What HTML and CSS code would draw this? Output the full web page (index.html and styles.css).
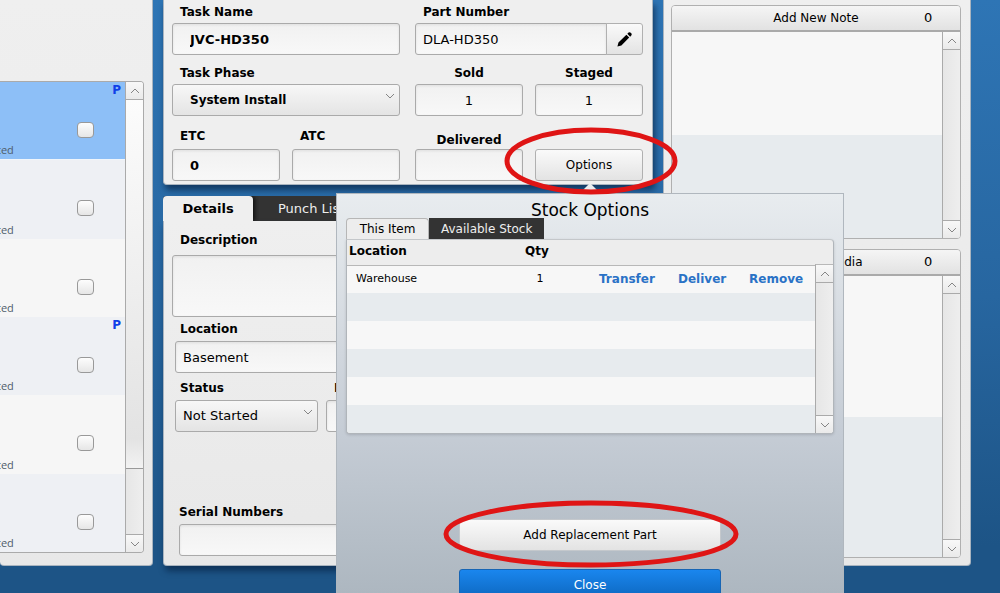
FILE: index.html
```html
<!DOCTYPE html>
<html lang="en">
<head>
<meta charset="utf-8">
<title>Task Details</title>
<link rel="stylesheet" href="styles.css">
</head>
<body>
<svg width="0" height="0" class="defs" aria-hidden="true">
  <symbol id="up" viewBox="0 0 10 6"><path d="M1 5 L5 1 L9 5" fill="none" stroke="#858585"/></symbol>
  <symbol id="down" viewBox="0 0 10 6"><path d="M1 1 L5 5 L9 1" fill="none" stroke="#858585"/></symbol>
</svg>
<main class="app">
  <section class="panel tasks" aria-label="Tasks">
    <div class="task-box">
      <ul class="task-list">
        <li class="task selected"><span class="state">ted</span><input type="checkbox" class="check" aria-label="Task 1"><b class="flag">P</b></li>
        <li class="task"><span class="state">ted</span><input type="checkbox" class="check" aria-label="Task 2"></li>
        <li class="task"><span class="state">ted</span><input type="checkbox" class="check" aria-label="Task 3"></li>
        <li class="task"><span class="state">ted</span><input type="checkbox" class="check" aria-label="Task 4"><b class="flag">P</b></li>
        <li class="task"><span class="state">ted</span><input type="checkbox" class="check" aria-label="Task 5"></li>
        <li class="task"><span class="state">ted</span><input type="checkbox" class="check" aria-label="Task 6"></li>
      </ul>
      <div class="scroll">
        <button class="step" aria-label="Scroll up"><svg class="chev"><use href="#up"/></svg></button>
        <div class="track"><div class="thumb"></div></div>
        <button class="step" aria-label="Scroll down"><svg class="chev"><use href="#down"/></svg></button>
      </div>
    </div>
  </section>

  <div class="center">
    <section class="panel summary" aria-label="Task summary">
      <div class="pair">
        <div class="field wide"><label for="name">Task Name</label><input id="name" class="box strong" value="JVC-HD350"></div>
        <div class="field wide"><label for="part">Part Number</label>
          <div class="joined">
            <input id="part" class="box" value="DLA-HD350">
            <button class="btn edit" aria-label="Edit part number"><svg width="17" height="17" viewBox="0 0 18 18"><path d="M1.500 16.500 L2.600 12.200 L11 4 L14 7 L5.700 15.300 Z M12 3 L13.300 1.700 Q14.500 .8 15.600 1.900 L16.200 2.500 Q17.200 3.600 16.200 4.800 L15 6 Z"/></svg></button>
          </div>
        </div>
        <div class="field wide"><label for="phase">Task Phase</label>
          <div class="pick"><select id="phase" class="box strong"><option>System Install</option></select><svg class="chev"><use href="#down"/></svg></div>
        </div>
        <div class="duo">
          <div class="field mid"><label for="sold">Sold</label><input id="sold" class="box" value="1"></div>
          <div class="field mid"><label for="staged">Staged</label><input id="staged" class="box" value="1"></div>
        </div>
        <div class="duo last">
          <div class="field"><label for="etc">ETC</label><input id="etc" class="box strong" value="0"></div>
          <div class="field"><label for="atc">ATC</label><input id="atc" class="box strong"></div>
        </div>
        <div class="duo last">
          <div class="field mid low"><label for="delivered">Delivered</label><input id="delivered" class="box"></div>
          <div class="field options">
            <button class="btn">Options</button>
            <svg class="pointer" width="16" height="8" viewBox="0 0 16 8"><path d="M0 8 L8 0 L16 8 Z" fill="#e9edf0"/></svg>
            <svg class="ring ring-options" width="174" height="68"><ellipse cx="87" cy="34" rx="84" ry="31"/></svg>
          </div>
        </div>
      </div>
    </section>

    <section class="details" aria-label="Task details">
      <div class="tabs">
        <button class="tab active">Details</button>
        <button class="tab">Punch List</button>
      </div>
      <div class="panel details-body">
        <div class="field"><label for="desc">Description</label><textarea id="desc" class="box"></textarea></div>
        <div class="field inset"><label for="loc">Location</label><input id="loc" class="box" value="Basement"></div>
        <div class="status-row">
          <div class="field inset"><label for="status">Status</label>
            <div class="pick"><select id="status" class="box"><option>Not Started</option></select><svg class="chev"><use href="#down"/></svg></div>
          </div>
          <div class="field"><label for="next">I</label><input id="next" class="box"></div>
        </div>
        <div class="field serial"><label for="serial">Serial Numbers</label><input id="serial" class="box"></div>
      </div>
    </section>

    <section class="dialog" role="dialog" aria-labelledby="stock">
      <h2 id="stock">Stock Options</h2>
      <div class="stock-tabs">
        <button class="stock-tab active">This Item</button>
        <button class="stock-tab">Available Stock</button>
      </div>
      <div class="stock">
        <table>
          <colgroup><col class="c-loc"><col class="c-qty"><col class="c-act"><col class="c-del"><col></colgroup>
          <thead><tr><th>Location</th><th class="num">Qty</th><th></th><th></th><th></th></tr></thead>
          <tbody>
            <tr><td>Warehouse</td><td class="num">1</td><td><a href="#">Transfer</a></td><td><a href="#">Deliver</a></td><td><a href="#">Remove</a></td></tr>
            <tr><td colspan="5"></td></tr>
            <tr><td colspan="5"></td></tr>
            <tr><td colspan="5"></td></tr>
            <tr><td colspan="5"></td></tr>
            <tr><td colspan="5"></td></tr>
          </tbody>
        </table>
        <div class="scroll">
          <button class="step" aria-label="Scroll up"><svg class="chev"><use href="#up"/></svg></button>
          <div class="track"></div>
          <button class="step" aria-label="Scroll down"><svg class="chev"><use href="#down"/></svg></button>
        </div>
      </div>
      <div class="actions">
        <button class="btn">Add Replacement Part</button>
        <button class="btn primary">Close</button>
        <svg class="ring ring-add" width="296" height="68"><ellipse cx="148" cy="34" rx="145" ry="31"/></svg>
      </div>
    </section>
  </div>

  <section class="panel extras" aria-label="Notes and media">
    <div class="feed notes">
      <div class="feed-head"><button>Add New Note</button><span>0</span></div>
      <div class="feed-body">
        <div class="stripes"><div></div><div></div></div>
        <div class="scroll">
          <button class="step" aria-label="Scroll up"><svg class="chev"><use href="#up"/></svg></button>
          <div class="track"></div>
          <button class="step" aria-label="Scroll down"><svg class="chev"><use href="#down"/></svg></button>
        </div>
      </div>
    </div>
    <div class="feed media">
      <div class="feed-head"><button>Add New Media</button><span>0</span></div>
      <div class="feed-body">
        <div class="stripes"><div></div><div></div></div>
        <div class="scroll">
          <button class="step" aria-label="Scroll up"><svg class="chev"><use href="#up"/></svg></button>
          <div class="track"></div>
          <button class="step" aria-label="Scroll down"><svg class="chev"><use href="#down"/></svg></button>
        </div>
      </div>
    </div>
  </section>
</main>
</body>
</html>
```

FILE: styles.css
```css
* { box-sizing: border-box; }

body {
  margin: 0;
  font: 12px/16px Verdana, "DejaVu Sans", sans-serif;
  color: #000;
}

button, input, select, textarea {
  font: inherit;
  color: inherit;
  margin: 0;
  padding: 0;
  border: 0;
  border-radius: 0;
  background: none;
  appearance: none;
  outline: none;
}

.defs { position: absolute; }

.app {
  display: grid;
  grid-template-columns: 153fr 490fr 308fr;
  gap: 10px;
  min-height: 100vh;
  padding: 0 29px 27px 0;
  overflow: hidden;
  position: relative;
  background: linear-gradient(#2e75b5, #2766a0 50%, #1d5486 92%);
}

.panel {
  background: linear-gradient(#efefef, #e8e8e8);
  border: solid #a9b4bf;
  border-width: 0 1px 1px;
  border-radius: 0 0 4px 4px;
}

/* Task list */
.tasks {
  display: flex;
  padding: 81px 8px 12px 0;
  border-left: 0;
}

.task-box {
  flex: 1;
  display: flex;
  border: 1px solid #aaa;
  border-left: 0;
  border-radius: 0 4px 4px 0;
  overflow: hidden;
}

.task-list {
  flex: 1;
  display: grid;
  grid-template-rows: repeat(6, 1fr);
  margin: 0;
  padding: 0;
  list-style: none;
}

.task {
  display: flex;
  justify-content: space-between;
  padding-right: 4px;
  background: #f6f6f6;
}

.task:nth-child(even), .task:last-child { background: #eef0f4; }
.task.selected { background: #8dbff7; border-bottom: 1px solid #f0f5fb; }

.state {
  width: 77px;
  align-self: flex-end;
  padding-bottom: 1px;
  font-family: "Open Sans", "Noto Sans", sans-serif;
  font-size: 11px;
  text-indent: -3px;
  color: #4f5d6b;
}

.check {
  width: 17px;
  height: 16px;
  margin-top: 40px;
  margin-right: auto;
  border: 1px solid #999;
  border-radius: 4px;
  background: linear-gradient(#fdfdfd, #e6e6e6);
}

.flag { color: #1040e8; }

/* Scrollbars */
.scroll {
  flex: none;
  display: flex;
  flex-direction: column;
  width: 18px;
  border-left: 1px solid #aaa;
  background: #ececec;
}

.step {
  display: flex;
  align-items: center;
  justify-content: center;
  height: 18px;
  background: linear-gradient(#f8f8f8, #eaeaea);
}

.step:first-child { border-bottom: 1px solid #aaa; }
.step:last-child { border-top: 1px solid #aaa; }

.track { flex: 1; background: linear-gradient(90deg, #e6e6e6, #eee); }

.thumb {
  height: 85%;
  border-bottom: 1px solid #999;
  background: linear-gradient(#fcfcfc, #e3e3e3 92%, #f2f2f2);
}

.chev { width: 10px; height: 6px; }

/* Fields */
.center {
  position: relative;
  z-index: 1;
  display: flex;
  flex-direction: column;
  gap: 11px;
}

.field {
  flex: 1;
  display: flex;
  flex-direction: column;
  gap: 3px;
  min-width: 0;
}

.field label { padding-left: 8px; font-weight: bold; }

.mid label { padding: 0; text-align: center; }
.mid .box { text-align: center; padding: 0; }

.box {
  width: 100%;
  min-width: 0;
  height: 32px;
  padding: 0 7px;
  border: 1px solid #aaa;
  border-radius: 3px;
  background: linear-gradient(#f1f1f1, #f8f8f8);
  box-shadow: inset 0 1px 3px rgba(0, 0, 0, .08);
  font-size: 13px;
}

.strong { padding-left: 17px; font-weight: bold; }

select.box { background: linear-gradient(#f7f7f7, #e4e4e4); box-shadow: none; }
select.strong { font-size: 12px; }

.pick { position: relative; }
.pick .chev { position: absolute; right: 5px; top: 9px; pointer-events: none; }

.joined { display: flex; }
.joined .box { border-radius: 3px 0 0 3px; }

.btn {
  height: 32px;
  border: 1px solid #b0b0b0;
  border-radius: 3px;
  background: linear-gradient(#fafafa, #e3e3e3);
}

.edit {
  flex: none;
  width: 37px;
  display: flex;
  align-items: center;
  justify-content: center;
  margin-left: -1px;
  border-radius: 0 3px 3px 0;
}

/* Summary card */
.summary {
  padding: 4px 9px 3px 8px;
  background: #efefef;
  box-shadow: 2px 5px 6px rgba(10, 40, 75, .75);
}

.pair { display: grid; grid-template-columns: 1fr 1fr; gap: 10px 15px; }
.duo { display: flex; gap: 12px; }
.last { padding-top: 2px; }
.last .field { gap: 5px; }
.last .low { gap: 1px; padding-top: 4px; }

.options { position: relative; justify-content: flex-end; }

.pointer { position: absolute; left: 47px; bottom: -10px; z-index: 2; }

.ring {
  position: absolute;
  z-index: 4;
  fill: none;
  stroke: #df1515;
  stroke-width: 5px;
  pointer-events: none;
}

.ring-options { left: -31px; bottom: -14px; }

/* Details card */
.details { flex: 1; display: flex; flex-direction: column; }

.tabs { display: flex; background: #333; border-radius: 4px 4px 0 0; }

.tab { height: 25px; padding: 0 25px; color: #eee; font-size: 13px; }

.tab.active {
  width: 90px;
  padding: 0;
  color: #000;
  font-weight: bold;
  background: #efefef;
  border-radius: 4px 4px 0 0;
  box-shadow: 2px 0 4px #111;
  clip-path: inset(0 -6px 0 0);
}

.details-body {
  flex: 1;
  display: flex;
  flex-direction: column;
  gap: 4px;
  padding: 11px 8px 9px;
  box-shadow: 2px 5px 6px rgba(10, 40, 75, .75);
}

.details-body .field { flex: none; gap: 4px; }
.details-body textarea { height: 62px; margin-top: 3px; resize: none; display: block; }
.details-body .inset { padding-left: 3px; }
.details-body .inset label { padding-left: 5px; }
.status-row { display: flex; gap: 8px; margin-top: 3px; }
.status-row .inset { width: 146px; }
.status-row .field:last-child { flex: 1; }
.details-body .serial { margin-top: auto; padding-left: 7px; }
.details-body .serial label { padding-left: 0; }

/* Stock dialog */
.dialog {
  position: absolute;
  z-index: 3;
  top: 193px;
  right: -191px;
  bottom: -27px;
  width: 508px;
  padding: 8px 9px 0;
  border: 1px solid #b0b7be;
  border-bottom: 0;
  overflow: hidden;
  background: linear-gradient(#e8ecef, #c5ccd5 60%, #adb7c0);
}

.dialog h2 {
  margin: 0;
  font-size: 17px;
  font-weight: normal;
  line-height: 16px;
  text-align: center;
}

.stock-tabs { display: flex; }

.stock-tab { height: 21px; padding: 0 12px; background: #333; color: #eee; }

.stock-tab.active {
  width: 83px;
  padding: 0;
  background: #ededed;
  color: #000;
  border: 1px solid #b6b6b6;
  border-bottom: 0;
  border-radius: 4px 4px 0 0;
}

.stock {
  display: flex;
  border: 1px solid #b0b5ba;
  border-top-color: #c4c7ca;
  border-radius: 0 4px 4px 4px;
  overflow: hidden;
  background: #ededed;
  box-shadow: 0 1px 3px rgba(0, 0, 0, .15);
}

.stock table { flex: 1; border-collapse: collapse; table-layout: fixed; }
.c-loc { width: 150px; }
.c-qty { width: 86px; }
.c-act { width: 95px; }
.c-del { width: 71px; }
.stock th { height: 25px; padding: 0 0 2px 2px; text-align: left; border-bottom: 1px solid #b8b8b8; }
.stock td { height: 28px; padding: 0; }
.stock td:first-child { padding-left: 9px; font-size: 11px; }
.stock .num { text-align: center; font-size: 11px; }
.stock th.num { padding-right: 8px; font-size: 12px; }
.stock td:nth-child(3) { padding-left: 16px; }
.stock tbody tr { background: #f7f7f7; }
.stock tbody tr:nth-child(even) { background: #e7ebee; }
.stock a { color: #2a72c6; font-weight: bold; text-decoration: none; }
.stock .scroll { margin-top: 24px; border-top: 1px solid #b8b8b8; }

.actions {
  position: relative;
  display: flex;
  flex-direction: column;
  gap: 18px;
  width: 262px;
  margin: 85px auto 0;
}

.actions .btn { border-color: #c4c8cc; }

.actions .primary {
  color: #fff;
  border-color: #1765b4;
  background: linear-gradient(#1a86ee, #0c66bd);
}

.ring-add { left: -16px; top: -19px; }

/* Notes and media */
.extras {
  display: flex;
  flex-direction: column;
  gap: 10px;
  padding: 5px 9px 7px 7px;
}

.feed {
  display: flex;
  flex-direction: column;
  border: 1px solid #b0b0b0;
  border-radius: 4px;
  overflow: hidden;
}

.notes { flex: 235; }
.media { flex: 310; }

.feed-head {
  display: grid;
  grid-template-columns: 1fr 64px;
  align-items: center;
  height: 26px;
  border-bottom: 2px solid #aaa;
  background: linear-gradient(#f5f5f5, #e2e2e2);
}

.feed-head button { padding-left: 64px; }
.feed-head span { padding-left: 28px; font-size: 13px; }

.feed-body { flex: 1; display: flex; }
.stripes { flex: 1; display: grid; grid-template-rows: 1fr 1fr; background: #f7f7f7; }
.stripes div:last-child { background: #e7ebee; }
```
